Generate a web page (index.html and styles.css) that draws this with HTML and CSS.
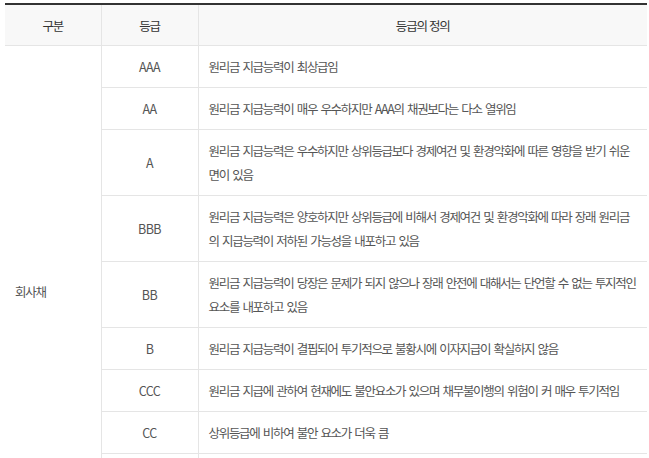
FILE: index.html
```html
<!DOCTYPE html>
<html lang="ko">
<head>
<meta charset="utf-8">
<link rel="stylesheet" href="styles.css">
</head>
<body>
<div class="wrap">
<table class="grade-table">
  <colgroup>
    <col class="c1">
    <col class="c2">
    <col class="c3">
  </colgroup>
  <thead>
    <tr>
      <th>구분</th>
      <th>등급</th>
      <th>등급의 정의</th>
    </tr>
  </thead>
  <tbody>
    <tr>
      <td class="kind" rowspan="10">회사채</td>
      <td class="grade">AAA</td>
      <td class="def">원리금 지급능력이 최상급임</td>
    </tr>
    <tr>
      <td class="grade">AA</td>
      <td class="def">원리금 지급능력이 매우 우수하지만 AAA의 채권보다는 다소 열위임</td>
    </tr>
    <tr>
      <td class="grade">A</td>
      <td class="def">원리금 지급능력은 우수하지만 상위등급보다 경제여건 및 환경악화에 따른 영향을 받기 쉬운 면이 있음</td>
    </tr>
    <tr>
      <td class="grade">BBB</td>
      <td class="def">원리금 지급능력은 양호하지만 상위등급에 비해서 경제여건 및 환경악화에 따라 장래 원리금의 지급능력이 저하된 가능성을 내포하고 있음</td>
    </tr>
    <tr>
      <td class="grade">BB</td>
      <td class="def">원리금 지급능력이 당장은 문제가 되지 않으나 장래 안전에 대해서는 단언할 수 없는 투지적인 요소를 내포하고 있음</td>
    </tr>
    <tr>
      <td class="grade">B</td>
      <td class="def">원리금 지급능력이 결핍되어 투기적으로 불황시에 이자지급이 확실하지 않음</td>
    </tr>
    <tr>
      <td class="grade">CCC</td>
      <td class="def">원리금 지급에 관하여 현재에도 불안요소가 있으며 채무불이행의 위험이 커 매우 투기적임</td>
    </tr>
    <tr>
      <td class="grade">CC</td>
      <td class="def">상위등급에 비하여 불안 요소가 더욱 큼</td>
    </tr>
    <tr>
      <td class="grade">C</td>
      <td class="def">채무불이행의 위험성이 높고 원리금 상환능력이 없음</td>
    </tr>
    <tr>
      <td class="grade">D</td>
      <td class="def">상환 불능상태임</td>
    </tr>
  </tbody>
</table>
</div>
</body>
</html>
```

FILE: styles.css
```css
html, body {
  margin: 0;
  padding: 0;
  background: #fff;
}

.wrap {
  padding: 3px 2px 0 5px;
}

.grade-table {
  width: 642px;
  border-collapse: collapse;
  table-layout: fixed;
  border-top: 2px solid #333;
  font-family: "Noto Sans CJK KR", "Noto Sans", sans-serif;
  font-size: 12.5px;
  color: #555;
}

.c1 { width: 96px; }
.c2 { width: 97px; }
.c3 { width: 449px; }

.grade-table th {
  height: 40px;
  padding: 0;
  background: #f8f8f8;
  font-weight: normal;
  color: #333;
  letter-spacing: -1.2px;
  border-bottom: 1px solid #e5e5e5;
  border-left: 1px solid #e5e5e5;
  text-align: center;
}

.grade-table th:first-child {
  border-left: 0;
}

.grade-table td {
  padding: 9px 10px 8px;
  line-height: 24px;
  border-bottom: 1px solid #e5e5e5;
  border-left: 1px solid #e5e5e5;
  vertical-align: middle;
}

.grade-table td.kind {
  border-left: 0;
  text-align: left;
  letter-spacing: -1.2px;
}

.grade-table td.grade {
  text-align: center;
  letter-spacing: -0.5px;
}

.grade-table td.def {
  text-align: left;
  letter-spacing: -1.3px;
  word-spacing: 1.1px;
}
```
